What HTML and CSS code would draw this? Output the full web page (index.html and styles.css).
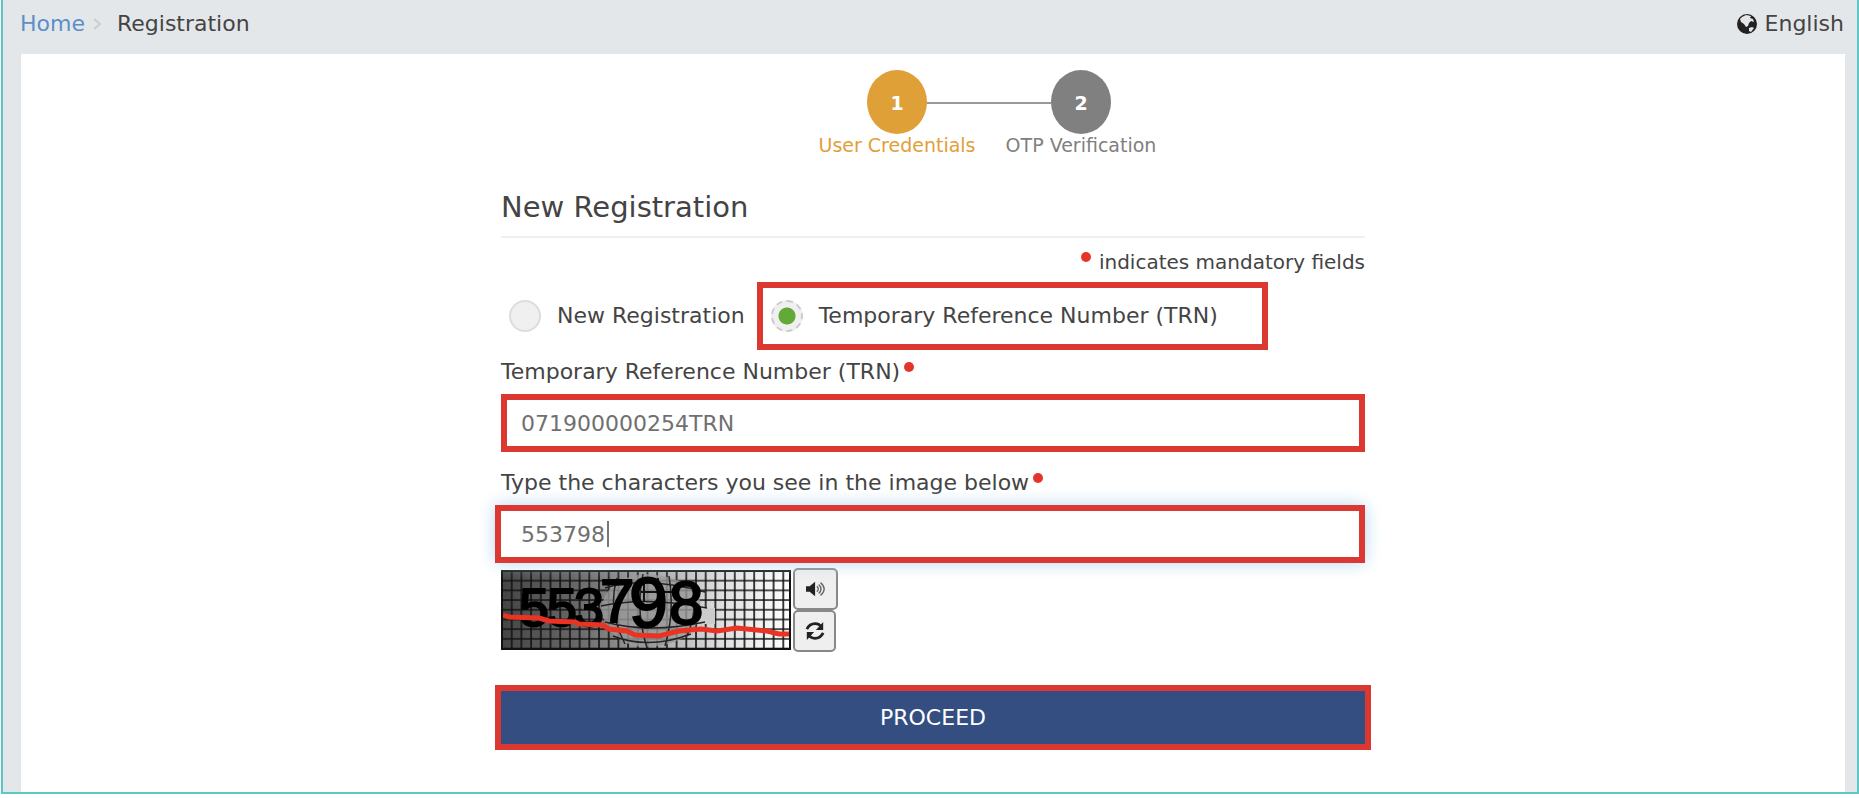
FILE: index.html
```html
<!DOCTYPE html>
<html lang="en">
<head>
    <meta charset="UTF-8">
    <meta name="viewport" content="width=device-width, initial-scale=1.0">
    <title>New Registration</title>
    <link rel="stylesheet" href="styles.css">
</head>
<body>
    <div class="page">
        <header class="topbar">
            <nav class="breadcrumb">
                <a href="#">Home</a>
                <svg class="chevron" viewBox="0 0 8 12"><path d="M1 1l6 5-6 5"/></svg>
                <span>Registration</span>
            </nav>
            <a class="language" href="#">
                <svg class="globe" viewBox="0 0 20 20">
                    <circle cx="10" cy="10" r="10" fill="#222"/>
                    <path fill="#e4e7ea" d="M5 3l4-2 5 1-1 2 3 1 1 3-3-1-2 2-1 3-2 1-2-3-3-2-1-3zM12 14l3-1 2 1-3 4-2-1z"/>
                </svg>
                English
            </a>
        </header>

        <main class="panel">
            <ol class="steps">
                <li class="step active">
                    <span class="step-number">1</span>
                    <span class="step-label">User Credentials</span>
                </li>
                <li class="step">
                    <span class="step-number">2</span>
                    <span class="step-label">OTP Verification</span>
                </li>
            </ol>

            <form class="registration" action="#">
                <h1>New Registration</h1>
                <p class="mandatory"><i class="dot"></i> indicates mandatory fields</p>

                <div class="options">
                    <label class="option">
                        <input type="radio" name="type" value="new">
                        New Registration
                    </label>
                    <label class="option highlight">
                        <input type="radio" name="type" value="trn" checked>
                        Temporary Reference Number (TRN)
                    </label>
                </div>

                <label class="field-label" for="trn">Temporary Reference Number (TRN)<i class="dot"></i></label>
                <input class="field" type="text" id="trn" value="071900000254TRN">

                <label class="field-label" for="captcha">Type the characters you see in the image below<i class="dot"></i></label>
                <div class="captcha-field">
                    <input class="field focused" type="text" id="captcha" value="553798">
                    <span class="caret"></span>
                </div>

                <div class="captcha">
                    <svg class="captcha-image" viewBox="0 0 290 80" role="img" aria-label="Captcha">
                        <defs>
                            <linearGradient id="shade">
                                <stop offset="0" stop-color="#444"/>
                                <stop offset=".25" stop-color="#666"/>
                                <stop offset=".5" stop-color="#a0a0a0"/>
                                <stop offset=".75" stop-color="#ddd"/>
                                <stop offset="1" stop-color="#fff"/>
                            </linearGradient>
                            <pattern id="grid" width="9.7" height="9.7" patternUnits="userSpaceOnUse">
                                <path d="M0 1h9.7M1 0v9.7" stroke="#111" stroke-width="1.6" fill="none"/>
                            </pattern>
                        </defs>
                        <rect width="290" height="80" fill="url(#shade)"/>
                        <rect width="290" height="80" fill="url(#grid)"/>
                        <path d="M100 40q4-32 44-36 40 2 54 22 6 22-10 38-20 14-48 13-32-4-40-37z" fill="#999" opacity=".8"/>
                        <path d="M198 38h16v16h-18z" fill="#ccc"/>
                        <path d="M104 18q40-12 100 4M100 36q46-10 106 2M104 52q44 12 100 0M112 66q36 14 78-2M116 8q-10 32 8 66M142 4q-8 36 4 74M168 6q6 36-4 70M190 14q8 24-4 52" fill="none" stroke="#222" stroke-width="1.5"/>
                        <path d="M140 22h34M143 10v22M157 8v30" fill="none" stroke="#111" stroke-width="2"/>
                        <text class="captcha-text" y="56"><tspan x="18" font-size="54">5</tspan><tspan x="46" font-size="54">5</tspan><tspan x="73" font-size="54">3</tspan><tspan x="99" y="52" font-size="62">7</tspan><tspan x="128" y="57" font-size="70">9</tspan><tspan x="168" y="54" font-size="62">8</tspan></text>
                        <path d="M2 45l6 2 30 1 10 3 26 1 4 2 24 1 6 4 18 2 8 4 24 1 20-5 22-2 16 2 20-3 30 3 12 3h20" fill="none" stroke="#ea3323" stroke-width="5"/>
                        <rect x="1" y="1" width="288" height="78" fill="none" stroke="#111" stroke-width="2"/>
                    </svg>
                    <div class="captcha-buttons">
                        <button type="button" class="icon-btn wide" aria-label="Play captcha audio">
                            <svg viewBox="0 0 22 18">
                                <path d="M0 6h4l6-5v16l-6-5H0z" fill="#222"/>
                                <path d="M12 6q3 3 0 6M14 4q5 5 0 10M16 2q8 7 0 14" fill="none" stroke="#666" stroke-width="1.5"/>
                            </svg>
                        </button>
                        <button type="button" class="icon-btn" aria-label="Refresh captcha">
                            <svg viewBox="0 0 22 20">
                                <path d="M2 8Q5 2 11 2q5 0 7 4M20 12q-3 6-9 6-5 0-7-4" fill="none" stroke="#222" stroke-width="3"/>
                                <path d="M20 0v9h-8zM2 20v-9h8z" fill="#222"/>
                            </svg>
                        </button>
                    </div>
                </div>

                <button type="submit" class="proceed">PROCEED</button>
            </form>
        </main>
    </div>
</body>
</html>
```

FILE: styles.css
```css
* {
    margin: 0;
    padding: 0;
    box-sizing: border-box;
}

body {
    font-family: Verdana, 'DejaVu Sans', sans-serif;
    font-size: 22px;
    line-height: 24px;
    color: #444;
    background: #fff;
    min-height: 100vh;
    display: flex;
    padding: 0 0 4px 1px;
}

a {
    color: #5a8fc8;
    text-decoration: none;
}

.page {
    flex: 1;
    display: flex;
    flex-direction: column;
    background: #e4e7ea;
    border: 2px solid #5bc8c5;
    border-top: none;
}

.topbar {
    display: flex;
    justify-content: space-between;
    align-items: center;
    height: 54px;
    padding: 0 13px 6px 17px;
}

.breadcrumb {
    display: flex;
    align-items: center;
}

.chevron {
    width: 8px;
    height: 12px;
    margin: 0 16px 0 8px;
    fill: none;
    stroke: #ccc;
    stroke-width: 2;
}

.language {
    display: flex;
    align-items: center;
    gap: 8px;
    color: #444;
}

.globe {
    width: 20px;
    height: 20px;
}

.panel {
    flex: 1;
    margin: 0 12px 0 18px;
    padding: 16px 20px;
    background: #fff;
}

.steps {
    display: flex;
    justify-content: center;
    list-style: none;
    padding-left: 112px;
}

.step {
    position: relative;
    width: 184px;
    text-align: center;
    font-size: 19px;
    line-height: 22px;
    color: #808080;
}

.step-number {
    display: block;
    width: 60px;
    height: 64px;
    margin: 0 auto;
    border-radius: 50%;
    background: #808080;
    color: #fff;
    font-weight: bold;
    line-height: 66px;
}

.step-label {
    white-space: nowrap;
}

.step.active {
    color: #dfa038;
}

.step.active .step-number {
    background: #dfa038;
    color: #fff;
}

/* connector to the next step */
.step.active::after {
    content: "";
    position: absolute;
    top: 32px;
    left: 122px;
    width: 124px;
    height: 2px;
    background: #999;
}

.registration {
    max-width: 864px;
    margin: 32px auto 0;
}

h1 {
    font-size: 29px;
    font-weight: normal;
    line-height: 38px;
    padding-bottom: 10px;
    border-bottom: 2px solid #f0f0f0;
}

.mandatory {
    margin-top: 12px;
    font-size: 20px;
    text-align: right;
}

.dot {
    display: inline-block;
    width: 10px;
    height: 10px;
    margin: 2px 2px 0 4px;
    border-radius: 50%;
    background: #e5352a;
    vertical-align: top;
}

.options {
    display: flex;
    margin: 8px 0 10px;
}

.option {
    display: flex;
    align-items: center;
    gap: 16px;
    height: 68px;
    padding: 0 12px 0 8px;
    white-space: nowrap;
}

.highlight {
    border: 6px solid #db3832;
    padding: 0 44px 0 8px;
}

input[type="radio"] {
    appearance: none;
    width: 32px;
    height: 32px;
    border: 2px solid #ddd;
    border-radius: 50%;
    background: #f0f0f0;
}

input[type="radio"]:checked {
    border: 2px dashed #ccc;
    background: #f0f0f0 radial-gradient(circle, #63a938 8px, #f0f0f0 9px) border-box;
}

.field-label {
    display: block;
    margin-bottom: 10px;
}

.field {
    display: block;
    width: 100%;
    height: 58px;
    margin-bottom: 19px;
    padding: 0 14px;
    border: 6px solid #db3832;
    outline: none;
    font: inherit;
    color: #707070;
}

.captcha-field {
    position: relative;
    margin-left: -6px;
}

.focused {
    margin-bottom: 5px;
    padding-left: 20px;
    box-shadow: 0 0 16px #b8d8f4;
}

.caret {
    position: absolute;
    top: 16px;
    left: 112px;
    width: 2px;
    height: 26px;
    background: #777;
}

.captcha {
    display: flex;
    align-items: center;
    gap: 2px;
}

.captcha-image {
    width: 290px;
    height: 80px;
}

.captcha-text {
    font-family: 'Liberation Sans', sans-serif;
    stroke: #000;
    stroke-width: 2;
}

.captcha-buttons {
    display: flex;
    flex-direction: column;
    align-items: flex-start;
}

.icon-btn {
    display: flex;
    align-items: center;
    justify-content: center;
    width: 43px;
    height: 42px;
    border: 2px solid #888;
    border-radius: 5px;
    background: #efefef;
}

.icon-btn.wide {
    width: 45px;
}

.icon-btn svg {
    width: 20px;
    height: 20px;
}

.proceed {
    display: block;
    width: calc(100% + 12px);
    height: 65px;
    margin: 33px 0 0 -6px;
    border: 6px solid #db3832;
    background: #344e82;
    color: #fff;
    font: inherit;
}
```
